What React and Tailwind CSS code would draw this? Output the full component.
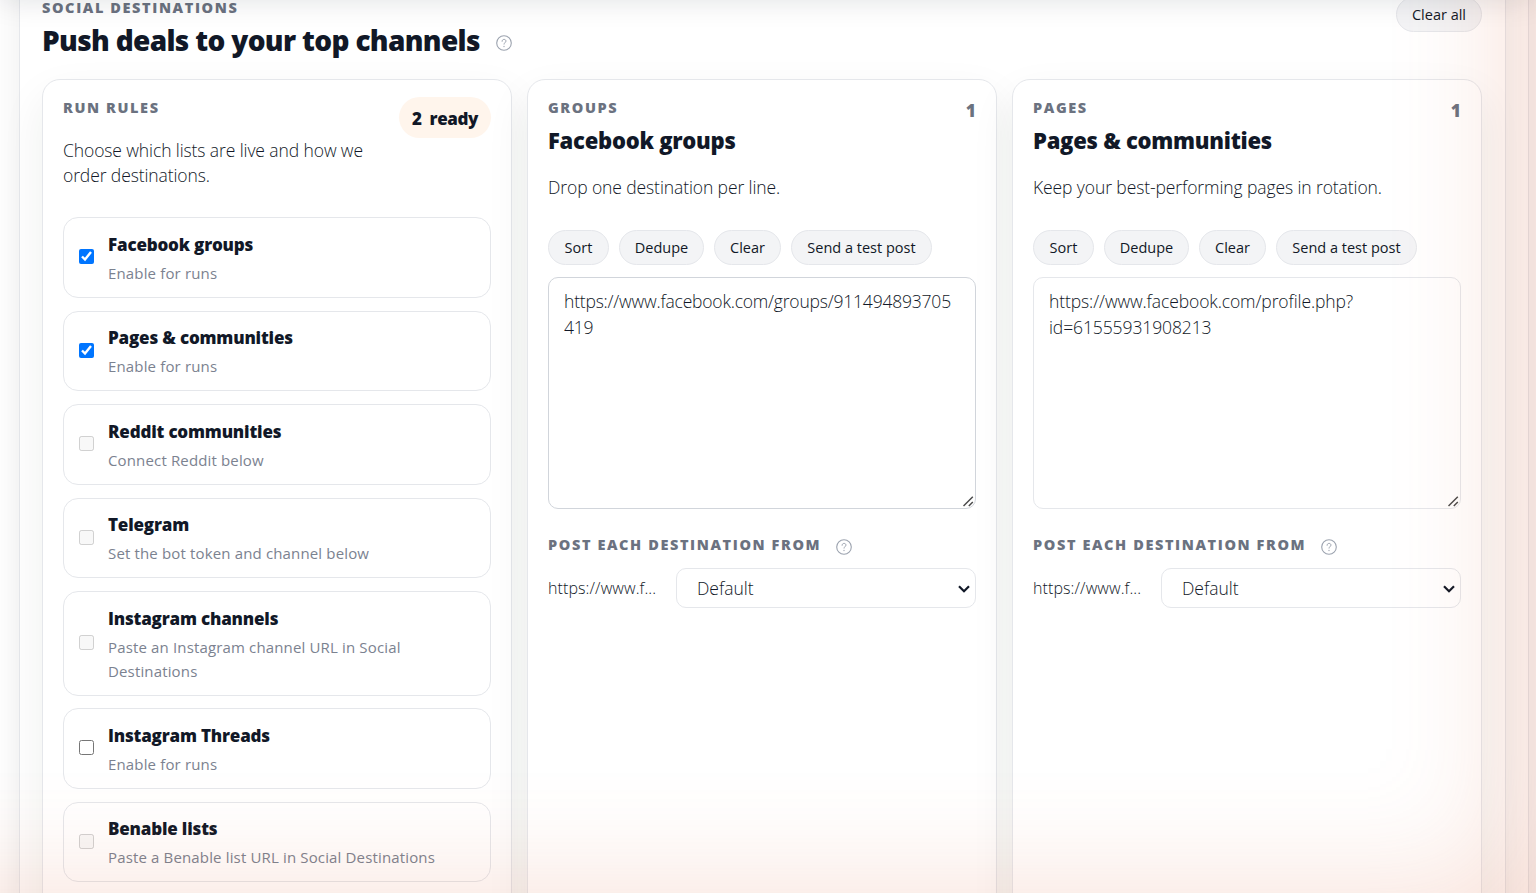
import React, { useState } from 'react';

const RULES = [
  { id: 'fb', title: 'Facebook groups', hint: 'Enable for runs', on: true },
  { id: 'pages', title: 'Pages & communities', hint: 'Enable for runs', on: true },
  { id: 'reddit', title: 'Reddit communities', hint: 'Connect Reddit below', disabled: true },
  { id: 'telegram', title: 'Telegram', hint: 'Set the bot token and channel below', disabled: true },
  { id: 'igChannels', title: 'Instagram channels', hint: 'Paste an Instagram channel URL in Social Destinations', disabled: true },
  { id: 'threads', title: 'Instagram Threads', hint: 'Enable for runs' },
  { id: 'benable', title: 'Benable lists', hint: 'Paste a Benable list URL in Social Destinations', disabled: true },
];

const HelpIcon = ({ className = '' }) => (
  <svg className={`h-4 w-4 shrink-0 text-[#9ca3af] ${className}`} viewBox="0 0 16 16" fill="none" stroke="currentColor" strokeLinecap="round">
    <circle cx="8" cy="8" r="7.3" strokeWidth="1.1" />
    <path d="M6.1 6.3c0-1.2.8-1.9 1.95-1.9s1.9.7 1.9 1.7c0 1.5-1.9 1.5-1.9 3" strokeWidth="1" />
    <path d="M8 11.3v.3" strokeWidth="1.2" />
  </svg>
);

const Eyebrow = ({ children }) => (
  <p className="whitespace-nowrap text-[14.5px] leading-[21px] font-extrabold tracking-[1.6px] text-[#6b7280] uppercase">{children}</p>
);

const Pill = ({ className, children }) => (
  <button type="button" className={`h-[35px] shrink-0 rounded-full border border-[#e5e7eb] bg-[#f3f4f6] text-[14.5px] font-medium whitespace-nowrap ${className}`}>
    {children}
  </button>
);

const Card = ({ children }) => (
  <div className="h-[900px] w-[470px] rounded-[18px] border border-[#e5e7eb] bg-white px-5 pt-[17px] shadow-[0_18px_45px_rgba(15,40,35,0.07)]">
    {children}
  </div>
);

const RuleRow = ({ rule }) => {
  const [checked, setChecked] = useState(Boolean(rule.on));
  return (
    <label className="flex items-center gap-3.5 rounded-[15px] border border-[#e5e7eb] pt-[10.5px] pr-4 pb-3 pl-[15px]">
      <input
        type="checkbox"
        className="h-[15px] w-[15px] shrink-0"
        checked={checked}
        disabled={rule.disabled}
        onChange={(e) => setChecked(e.target.checked)}
      />
      <span className="block">
        <span className="block text-[17px] leading-8 font-extrabold tracking-[-0.18px]">{rule.title}</span>
        <span className="block w-[336px] text-[15px] leading-6 tracking-[0.15px] text-[#7b8290]">{rule.hint}</span>
      </span>
    </label>
  );
};

const DestinationCard = ({ eyebrow, title, blurb, initial, focused }) => {
  const [value, setValue] = useState(initial);
  return (
    <Card>
      <div className="flex items-start justify-between">
        <Eyebrow>{eyebrow}</Eyebrow>
        <span className="h-[21px] pt-px text-[17.5px] leading-6 font-extrabold text-[#6b7280]">1</span>
      </div>
      <h3 className="mt-[6px] text-[22px] leading-[33px] font-extrabold tracking-[-0.25px]">{title}</h3>
      <p className="mt-[18px] text-[17.5px] leading-[25px] font-light tracking-[-0.1px]">{blurb}</p>
      <div className="mt-[30px] flex gap-2.5">
        <Pill className="w-[61px]">Sort</Pill>
        <Pill className="w-[85px]">Dedupe</Pill>
        <Pill className="w-[67px]">Clear</Pill>
        <Pill className="w-[141px]">Send a test post</Pill>
      </div>
      <div className="relative mt-3">
        <textarea
          spellCheck={false}
          value={value}
          onChange={(e) => setValue(e.target.value)}
          className={`block h-[232px] w-full resize-none rounded-[10px] border bg-white py-[10px] pr-5 pl-[15px] text-[17.5px] leading-[26px] font-light outline-none ${focused ? 'border-[#d1d5db] tracking-[-0.2px]' : 'border-[#e5e7eb] tracking-[-0.1px]'}`}
        />
        <svg className="pointer-events-none absolute right-[2px] bottom-[2px] h-[11px] w-[11px]" viewBox="0 0 11 11" fill="none" stroke="#4b4b4b" strokeWidth="1.5">
          <path d="M.5 10 9.8.7M5.8 10l4-4" />
        </svg>
      </div>
      <div className="mt-[25px] flex items-start gap-[15px]">
        <Eyebrow>Post each destination from</Eyebrow>
        <HelpIcon className="mt-[5px]" />
      </div>
      <div className="mt-[13px] flex items-center justify-between">
        <span className="w-[112px] text-[16px] leading-6 font-light tracking-[0.1px]">https://www.f...</span>
        <div className="relative">
          <select className="h-10 w-[300px] appearance-none rounded-[10px] border border-[#e5e7eb] bg-white pl-5 text-[17.5px] font-light">
            <option>Default</option>
          </select>
          <svg className="pointer-events-none absolute top-[17px] right-[6px] h-2 w-3" viewBox="0 0 12 8" fill="none" stroke="#111827" strokeWidth="2.2">
            <path d="m1 1.2 5 5 5-5" />
          </svg>
        </div>
      </div>
    </Card>
  );
};

export default function App() {
  return (
    <div className="relative h-[893px] w-[1536px] overflow-hidden bg-white font-['Open_Sans','Noto_Sans',sans-serif] text-[#111827]">
      <div className="-mt-10 h-[980px] w-[1529px] border-r border-[#e5e7eb] pl-[19px] shadow-[0_0_40px_rgba(15,23,42,0.08)]">
        <section className="h-full w-[1487px] border-x border-[#e5e7eb] bg-white pt-[37px] pl-[22px] shadow-[0_0_36px_rgba(0,0,0,0.07)]">
          <header className="flex h-[82px] w-[1440px] items-start justify-between">
            <div>
              <Eyebrow>Social destinations</Eyebrow>
              <div className="mt-px flex items-center gap-[16px]">
                <h2 className="text-[28px] leading-[42px] font-extrabold tracking-[-0.66px] whitespace-nowrap">Push deals to your top channels</h2>
                <HelpIcon className="mt-[5px]" />
              </div>
            </div>
            <Pill className="w-[86px]">Clear all</Pill>
          </header>

          <div className="flex gap-[15px]">
            <Card>
              <div className="relative">
                <Eyebrow>Run rules</Eyebrow>
                <span className="absolute top-0 right-0 h-[41px] w-[92px] rounded-full bg-[#fff5ec] text-center text-[17px] leading-[43px] font-extrabold tracking-[-0.4px]">2&nbsp; ready</span>
              </div>
              <p className="mt-5 w-[320px] text-[17.5px] leading-[25px] font-light tracking-[-0.1px]">
                Choose which lists are live and how we order destinations.
              </p>
              <div className="mt-[29.3px] flex flex-col gap-[12.95px]">
                {RULES.map((rule) => (
                  <RuleRow key={rule.id} rule={rule} />
                ))}
              </div>
            </Card>
            <DestinationCard
              eyebrow="Groups"
              title="Facebook groups"
              blurb="Drop one destination per line."
              initial="https://www.facebook.com/groups/911494893705419"
              focused
            />
            <DestinationCard
              eyebrow="Pages"
              title="Pages & communities"
              blurb="Keep your best-performing pages in rotation."
              initial="https://www.facebook.com/profile.php?id=61555931908213"
            />
          </div>
        </section>
      </div>

      {/* shadow under the sticky header and the warm glow along the lower right edges */}
      <div className="pointer-events-none absolute inset-x-0 -top-10 h-10 shadow-[0_0_30px_rgba(15,23,42,0.13)]" />
      <div className="pointer-events-none absolute -top-52 right-0 bottom-0 -left-52 shadow-[inset_-24px_0_120px_rgba(222,104,66,0.22)]" />
    </div>
  );
}
